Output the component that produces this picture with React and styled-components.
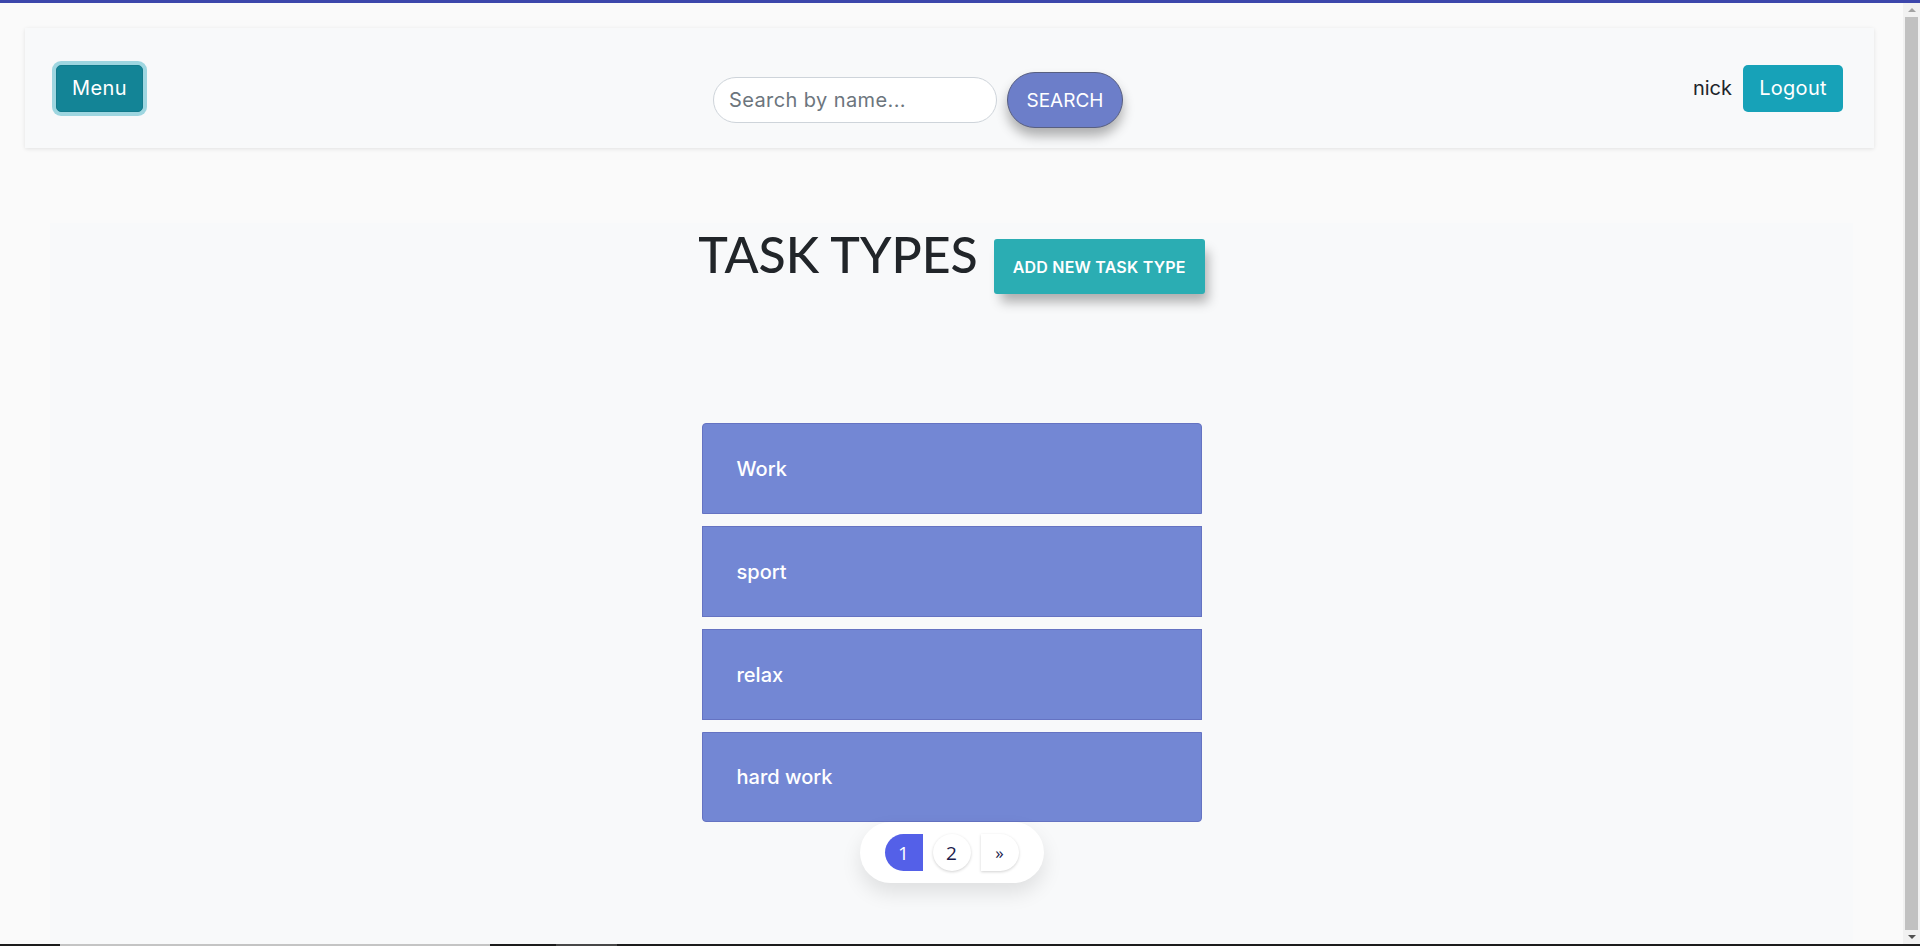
import React from 'react';
import styled, { createGlobalStyle } from 'styled-components';

const GlobalStyle = createGlobalStyle`
  html, body {
    margin: 0;
    padding: 0;
    background: #fafafa;
    font-family: Inter, "Noto Sans", sans-serif;
    color: #212529;
    overflow: hidden;
  }
  * {
    box-sizing: border-box;
  }
`

const Screen = styled.div`
  display: flex;
  flex-direction: column;
  height: 946px;
`

const TopLine = styled.div`
  height: 3px;
  flex-shrink: 0;
  background: #3c46ab;
`

const Window = styled.div`
  flex: 1;
  display: flex;
  min-height: 0;
`

const Page = styled.div`
  flex: 1;
  display: flex;
  flex-direction: column;
  min-width: 0;
`

const ScrollTrack = styled.div`
  display: flex;
  flex-direction: column;
  width: 17px;
  flex-shrink: 0;
  background: #f1f1f1;
`

const ScrollArrow = styled.div`
  display: flex;
  align-items: center;
  justify-content: center;
  height: 14px;
`

const Triangle = styled.span`
  width: 0;
  height: 0;
  border-left: 4px solid transparent;
  border-right: 4px solid transparent;
  ${(p) =>
    p.$down
      ? 'border-top: 4px solid #505050;'
      : 'border-bottom: 4px solid #a3a3a3;'}
`

const ScrollThumb = styled.div`
  flex: 1;
  margin: 0 2px;
  background: #c1c1c1;
`

const BottomStrip = styled.div`
  display: flex;
  height: 2px;
  flex-shrink: 0;
  background: #1c1c1c;
`

const StripSegment = styled.span`
  width: ${(p) => p.$width}px;
  margin-left: ${(p) => p.$offset}px;
  background: ${(p) => p.$color};
`

const Header = styled.header`
  display: flex;
  align-items: center;
  justify-content: space-between;
  height: 120px;
  margin: 25px 29px 0 25px;
  padding: 0 31px;
  background: #f8f9fa;
  box-shadow: 0 1px 4px rgba(0, 0, 0, 0.1);
`

const MenuButton = styled.button`
  width: 87px;
  height: 47px;
  border: 1px solid #117a8b;
  border-radius: 5px;
  background: #138496;
  color: #fff;
  font-family: inherit;
  font-size: 20px;
  letter-spacing: 0.4px;
  box-shadow: 0 0 0 4px rgba(23, 162, 184, 0.4);
  cursor: pointer;
`

const SearchForm = styled.form`
  display: flex;
  align-items: center;
  gap: 10px;
  margin-top: 24px;
`

const SearchInput = styled.input`
  width: 284px;
  height: 46px;
  padding: 0 15px;
  border: 1px solid #ced4da;
  border-radius: 23px;
  background: #fff;
  font-family: inherit;
  font-size: 20px;
  letter-spacing: 0.4px;
  color: #495057;
  outline: none;

  &::placeholder {
    color: #6c757d;
  }
`

const SearchButton = styled.button`
  width: 116px;
  height: 56px;
  border: 1px solid #585f80;
  border-radius: 28px;
  background: #6c7ec9;
  color: #fff;
  font-family: inherit;
  font-size: 19px;
  box-shadow: 0 8px 12px rgba(0, 0, 0, 0.3);
  cursor: pointer;
`

const UserBox = styled.div`
  display: flex;
  align-items: center;
  gap: 11px;
`

const UserName = styled.span`
  font-size: 20px;
  color: #212529;
`

const LogoutButton = styled.button`
  width: 100px;
  height: 47px;
  border: none;
  border-radius: 5px;
  background: #17a2b8;
  color: #fff;
  font-family: inherit;
  font-size: 20px;
  letter-spacing: 0.3px;
  cursor: pointer;
`

const Main = styled.main`
  flex: 1;
  display: flex;
  flex-direction: column;
  align-items: center;
  margin: 75px 50px 0 50px;
  background: #f8f9fa;
`

const TitleRow = styled.div`
  display: flex;
  align-items: flex-start;
  gap: 16px;
`

const Title = styled.h1`
  margin: 0;
  font-family: Lato, Inter, sans-serif;
  font-size: 50px;
  font-weight: 500;
  line-height: 62px;
  letter-spacing: 0;
  color: #212529;
`

const AddButton = styled.button`
  width: 211px;
  height: 55px;
  margin-top: 16px;
  border: none;
  border-radius: 3px;
  background: #2badb3;
  color: #fff;
  font-family: inherit;
  font-size: 16px;
  font-weight: 600;
  letter-spacing: 0.2px;
  text-transform: uppercase;
  box-shadow: 5px 10px 12px -2px rgba(0, 0, 0, 0.3);
  cursor: pointer;
`

const TypeList = styled.ul`
  display: flex;
  flex-direction: column;
  gap: 12px;
  width: 500px;
  margin: 129px 0 0;
  padding: 0;
  list-style: none;
`

const TypeItem = styled.li`
  display: flex;
  align-items: center;
  height: 91px;
  padding: 0 34px;
  border: 1px solid #6573c2;
  background: #7387d4;
  color: #fff;
  font-size: 20px;
  font-weight: 500;

  &:first-child {
    border-radius: 4px 4px 0 0;
  }
  &:last-child {
    height: 90px;
    border-radius: 0 0 4px 4px;
  }
`

const Pager = styled.nav`
  display: flex;
  gap: 10px;
  padding: 12px 25px;
  margin-top: 0;
  border-radius: 31px;
  background: #fff;
  box-shadow: 0 10px 20px rgba(0, 0, 0, 0.1);
`

const PageLink = styled.span`
  display: flex;
  align-items: center;
  justify-content: center;
  width: 38px;
  height: 37px;
  font-family: "Open Sans", sans-serif;
  font-size: ${(p) => (p.$arrow ? '17px' : '19px')};
  color: ${(p) => (p.$active ? '#fff' : '#1b1b4b')};
  background: ${(p) => (p.$active ? '#5460e8' : '#fff')};
  border-radius: ${(p) => p.$radius};
  box-shadow: ${(p) => (p.$active ? 'none' : '0 1px 3px rgba(0, 0, 0, 0.18)')};
`

const types = ['Work', 'sport', 'relax', 'hard work'];

export default function App() {
  return (
    <>
      <GlobalStyle />
      <Screen>
        <TopLine />
        <Window>
          <Page>
            <Header>
              <MenuButton>Menu</MenuButton>
              <SearchForm onSubmit={(e) => e.preventDefault()}>
                <SearchInput placeholder="Search by name..." />
                <SearchButton>SEARCH</SearchButton>
              </SearchForm>
              <UserBox>
                <UserName>nick</UserName>
                <LogoutButton>Logout</LogoutButton>
              </UserBox>
            </Header>
            <Main>
              <TitleRow>
                <Title>TASK TYPES</Title>
                <AddButton>Add new task type</AddButton>
              </TitleRow>
              <TypeList>
                {types.map((t) => (
                  <TypeItem key={t}>{t}</TypeItem>
                ))}
              </TypeList>
              <Pager>
                <PageLink $active $radius="19px 0 0 19px">1</PageLink>
                <PageLink $radius="50%">2</PageLink>
                <PageLink $arrow $radius="0 19px 19px 0">»</PageLink>
              </Pager>
            </Main>
          </Page>
          <ScrollTrack>
            <ScrollArrow><Triangle /></ScrollArrow>
            <ScrollThumb />
            <ScrollArrow><Triangle $down /></ScrollArrow>
          </ScrollTrack>
        </Window>
        <BottomStrip>
          <StripSegment $offset={60} $width={430} $color="#c4c4c4" />
          <StripSegment $offset={66} $width={61} $color="#474747" />
        </BottomStrip>
      </Screen>
    </>
  );
}
